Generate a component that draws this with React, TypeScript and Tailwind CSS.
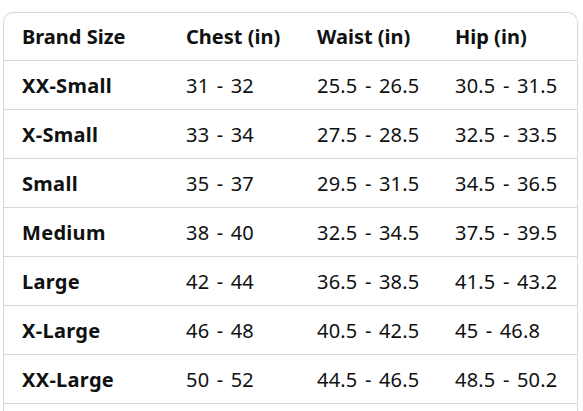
import React from "react";

const rows = [
  ["XX-Small", "31 - 32", "25.5 - 26.5", "30.5 - 31.5"],
  ["X-Small", "33 - 34", "27.5 - 28.5", "32.5 - 33.5"],
  ["Small", "35 - 37", "29.5 - 31.5", "34.5 - 36.5"],
  ["Medium", "38 - 40", "32.5 - 34.5", "37.5 - 39.5"],
  ["Large", "42 - 44", "36.5 - 38.5", "41.5 - 43.2"],
  ["X-Large", "46 - 48", "40.5 - 42.5", "45 - 46.8"],
  ["XX-Large", "50 - 52", "44.5 - 46.5", "48.5 - 50.2"],
];

const cols = "grid grid-cols-[164px_131px_138px_1fr]";

export default function App() {
  return (
    <div
      className="h-[411px] w-[583px] overflow-hidden bg-white pt-[12px] pl-[3px] pr-[5px] text-[#0f1111]"
      style={{ fontFamily: '"Noto Sans", "Open Sans", sans-serif' }}
    >
      <div className="rounded-t-[10px] border border-b-0 border-[#d5d9d9] h-[420px]">
        <div className={`${cols} h-[48px] items-center border-b border-[#d5d9d9] text-[20px] font-bold`}>
          <div className="pl-[18px]">Brand Size</div>
          <div className="pl-[18px]">Chest (in)</div>
          <div className="pl-[18px]">Waist (in)</div>
          <div className="pl-[18px]">Hip (in)</div>
        </div>
        {rows.map((r) => (
          <div
            key={r[0]}
            className={`${cols} h-[49px] items-center border-b border-[#d5d9d9] text-[20px] pt-[1px]`}
          >
            <div className="pl-[18px] font-bold tracking-[0.3px]">{r[0]}</div>
            <div className="pl-[18px] [word-spacing:2px] tracking-[0.2px]">{r[1]}</div>
            <div className="pl-[18px] [word-spacing:2px] tracking-[0.2px]">{r[2]}</div>
            <div className="pl-[18px] [word-spacing:2px] tracking-[0.2px]">{r[3]}</div>
          </div>
        ))}
      </div>
    </div>
  );
}
